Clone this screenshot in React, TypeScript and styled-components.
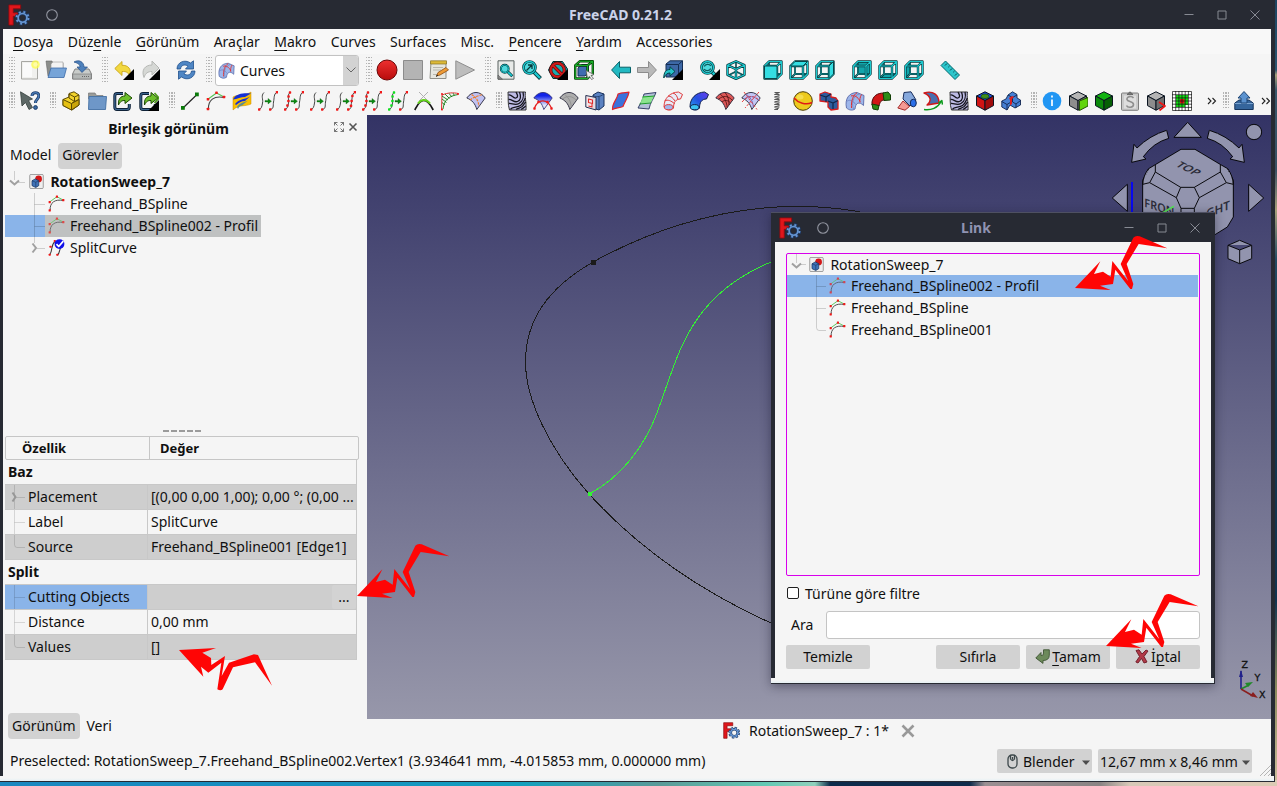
import React from "react";
import styled, { createGlobalStyle, css } from "styled-components";

const Global = createGlobalStyle`
  * { box-sizing: border-box; }
  html, body { margin: 0; padding: 0; overflow: hidden; }
  body { font-family: "Noto Sans", sans-serif; font-size: 14px; line-height: 19px; color: #101010; }
  svg { display: block; flex: none; }
`;

/* ---------- window chrome ---------- */

const Desktop = styled.div`
  position: relative;
  width: 1277px;
  height: 786px;
  overflow: hidden;
  background:
    linear-gradient(90deg, #1b87bf 0, #1690c0 330px, #12a0be 520px, #5a9a98 660px, #63c9b4 765px, #8fd0bc 815px, #0c2c4c 830px, #0f2c4c 970px, #9a8f92 985px, #8a8484 1100px, #d8c9b8 1130px, #dccab4 1277px) 0 780px / 1277px 6px no-repeat,
    linear-gradient(180deg, #1d4460 0, #2c5570 70px, #a8a07a 75px, #38566a 90px, #3a5064 170px, #a79f7a 210px, #224a62 260px, #14364e 420px, #123450 600px, #8c8a5c 690px, #d0c0a0 786px);
`;

const Frame = styled.div`
  width: 1275px;
  height: 782px;
  display: flex;
  flex-direction: column;
  background: #272a33;
  border-bottom: 1px solid #272a33;
`;

const TitleBar = styled.div<{ $h: number; $muted?: boolean }>`
  flex: none;
  height: ${(p) => p.$h}px;
  display: flex;
  align-items: center;
  padding-left: 8px;
  color: ${(p) => (p.$muted ? "#8f93b2" : "#cbd3ea")};
  font-weight: 700;
`;

const TitleLead = styled.div<{ $w: number }>`
  width: ${(p) => p.$w}px;
  display: flex;
  align-items: center;
  gap: 16px;
`;

const TitleText = styled.div`
  flex: 1;
  text-align: center;
`;

const TitleButtons = styled.div`
  width: 92px;
  display: flex;
  gap: 21px;
`;

const Body = styled.div`
  margin: 0 4px 0 3px;
  flex: 1;
  display: flex;
  flex-direction: column;
  background: #f5f5f5;
  min-height: 0;
`;

const BottomEdge = styled.div<{ $h: number }>`
  height: ${(p) => p.$h}px;
  flex: none;
  margin-right: 1px;
  background: linear-gradient(#f5f5f5 40%, #e6f1f5);
`;

const MenuBar = styled.div`
  height: 25px;
  flex: none;
  display: flex;
  align-items: center;
  gap: 14.4px;
  padding: 0 10px;
  background: #f8f8f8;
`;

const Key = styled.span`
  text-decoration: underline;
  text-decoration-thickness: 1px;
  text-underline-offset: 3px;
`;

const ToolRow = styled.div<{ $second?: boolean }>`
  height: ${(p) => (p.$second ? 30 : 31)}px;
  flex: none;
  display: flex;
  align-items: center;
  padding-left: 6px;
  padding-top: ${(p) => (p.$second ? 2 : 1)}px;
`;

const Tool = styled.div`
  width: 26px;
  height: 26px;
  flex: none;
  display: flex;
  align-items: center;
  justify-content: center;
`;

const Gap = styled.div<{ $w: number; $h?: number }>`
  flex: none;
  width: ${(p) => p.$w}px;
  height: ${(p) => p.$h ?? 0}px;
`;

const Grip = styled.div<{ $first?: boolean; $tall?: boolean; $after?: number }>`
  flex: none;
  width: 6px;
  height: ${(p) => (p.$tall ? 26 : 18)}px;
  margin-left: ${(p) => (p.$first ? 0 : 7)}px;
  margin-right: ${(p) => p.$after ?? 2}px;
  background:
    repeating-linear-gradient(180deg, transparent 0 1.5px, #f5f5f5 1.5px 3px),
    repeating-linear-gradient(90deg, #b4b4b4 0 1.3px, #f5f5f5 1.3px 2.4px);
`;

const Combo = styled.div`
  flex: none;
  width: 144px;
  height: 31px;
  margin-left: 1px;
  border: 1px solid #c2c2c2;
  border-radius: 3px;
  background: #fff;
  display: flex;
  align-items: center;
  overflow: hidden;
  padding-left: 2px;
`;

const ComboText = styled.div`
  flex: 1;
  padding-left: 5px;
`;

const ComboArrow = styled.div`
  width: 15px;
  height: 100%;
  background: #d3d3d3;
  display: flex;
  align-items: center;
  justify-content: center;
`;

const More = styled.div<{ $w: number }>`
  flex: none;
  width: ${(p) => p.$w}px;
  display: flex;
  justify-content: center;
`;

/* ---------- icons ---------- */

const INK = "#0b1521";
const TEAL = "#1cc9cf";
const TEALD = "#06363a";

const I = ({ children, s = 20 }: { children: React.ReactNode; s?: number }) => (
  <svg width={s} height={s} viewBox="0 0 20 20" fill="none" strokeLinejoin="round">
    {children}
  </svg>
);

const Corner = () => <path d="M20 9V20H9z" fill="#000" />;

const Logo = ({ s = 22 }: { s?: number }) => (
  <I s={s}>
    <path d="M.8.8H11.5V4.400H4.800V8H9V11.200H4.800V19.200H.8z" fill="#e0161b" stroke="#8a0d10" strokeWidth=".8" />
    <circle cx="13.200" cy="12.600" r="5.400" stroke="#1f3c68" strokeWidth="3" strokeDasharray="2.720 1.520" strokeDashoffset=".3" />
    <circle cx="13.200" cy="12.600" r="4" stroke="#1f3c68" strokeWidth="2.800" />
    <circle cx="13.200" cy="12.600" r="5.300" stroke="#6796d2" strokeWidth="1.900" strokeDasharray="1.700 2.460" strokeDashoffset="-.2" />
    <circle cx="13.200" cy="12.600" r="4" stroke="#6796d2" strokeWidth="1.500" />
  </I>
);

const Wire = ({ d, w = 1.2 }: { d: string; w?: number }) => (
  <>
    <path d={d} stroke={TEALD} strokeWidth={w + 1.2} />
    <path d={d} stroke={TEAL} strokeWidth={w} />
  </>
);

const ViewCube = ({ face, rear }: { face: string; rear?: boolean }) => (
  <I>
    {rear && <path d={face} fill="#12a5ab" stroke={TEALD} strokeWidth=".8" />}
    <Wire d="M6 2V14H19M6 14L1.5 18.5" w={0.6} />
    <Wire d="M1.5 6H14V18.5H1.5zM1.5 6L6 1.5H18.5L14 6M18.5 1.5V14L14 18.5" />
    {!rear && <path d={face} fill="#35dde2" stroke={TEALD} strokeWidth=".9" />}
  </I>
);

const Block = ({ top, left, right, children }: { top: string; left: string; right: string; children?: React.ReactNode }) => (
  <I>
    <g stroke={INK} strokeWidth="1">
      <path d="M10 .8L18.5 5 10 9.6 1.5 5z" fill={top} />
      <path d="M1.5 5L10 9.6V19.2L1.5 14.6z" fill={left} />
      <path d="M18.5 5L10 9.6V19.2L18.5 14.6z" fill={right} />
    </g>
    {children}
  </I>
);

const dotsL: [number, number][] = [[6, 1.5], [4.6, 5.5], [4.4, 10], [3.4, 14.5], [1.2, 18.5]];
const dotsR: [number, number][] = [[19, 1.2], [16.4, 5], [15.6, 10], [15, 14.8], [12.2, 18.5]];
const Dots = ({ at, c = "#f01818", r = 1.2 }: { at: [number, number][]; c?: string; r?: number }) => (
  <>
    {at.map(([x, y], i) => (
      <rect key={i} x={x - r} y={y - r} width={r * 2} height={r * 2} rx=".6" fill={c} />
    ))}
  </>
);

const Join = ({ l, r, lc, rc }: { l?: boolean; r?: boolean; lc?: string; rc?: string }) => (
  <I>
    <path d="M6 1.5C2.500 5 5.500 8 4.500 12C4 16 3 18 1 18.500" stroke="#333" strokeWidth=".9" />
    <path d="M19 1.200C15.500 3 16.500 7 15.500 11C15 15 16 18 12 18.500" stroke="#333" strokeWidth=".9" />
    <Dots at={l ? dotsL : [dotsL[4]]} c={lc} />
    <Dots at={r ? dotsR : [dotsR[0], dotsR[4]]} c={rc} />
    <path d="M7 9.400H10V7.400L13.500 10.200 10 13V11H7z" fill="#0c8a12" stroke="#064a08" strokeWidth=".3" />
  </I>
);

const SplineIcon = ({ s = 20, dim }: { s?: number; dim?: boolean }) => (
  <I s={s}>
    <g opacity={dim ? 0.7 : 1}>
      <path d="M2.200 8L10.500 2 18 6" stroke="#56c456" strokeWidth="1.100" />
      <path d="M2.500 18C2 9 8 4.500 18 6.500" stroke="#444" strokeWidth="1.100" />
      <Dots at={[[2, 18], [2, 8.300], [10.500, 1.800], [18, 6]]} r={1.300} />
    </g>
  </I>
);

const SplitIcon = ({ s = 17 }: { s?: number }) => (
  <I s={s}>
    <path d="M8 3C3 7 6 13 2 18.500M17 8C12 11 15 16 11 19" stroke="#333" strokeWidth="1.200" />
    <Dots at={[[8, 2.500], [2, 18.500], [11, 18.500], [3, 9]]} />
    <circle cx="13.500" cy="6" r="5.800" fill="#1010e8" />
    <path d="M10 6l2.600 2.800L18 2.500" stroke="#fff" strokeWidth="2" />
  </I>
);

const DocIcon = () => (
  <I s={15}>
    <rect x="1" y=".6" width="18" height="18.800" rx="1.500" fill="#efefef" stroke="#8b8b8b" strokeWidth="1.100" />
    <circle cx="12.800" cy="6.500" r="4.500" fill="#d21818" />
    <path d="M4 9L8.500 6.500 13 9V15.500L9 18 4 15.500z" fill="#3f73b8" stroke="#1a3763" />
    <path d="M4 9l5 2 4-2M9 11v6.500" stroke="#1a3763" strokeWidth=".8" />
  </I>
);

const FAN = "M.8 7C6-.4 14-.4 19.2 7L10.8 18.5C9.2 12.5 6 9 .8 7z";
const fanLines = "M5.2 3.2C9 6 11.5 10 12.3 16.500M10 1.5C13 5 14 9 14 14M3.5 8.2C8 4.500 13 4.300 17.5 9.500M7 11C10 8.500 12.5 9 15.5 12";
const Fan = ({ fill, line, children }: { fill: string; line?: string; children?: React.ReactNode }) => (
  <I>
    <path d={FAN} fill={fill} stroke="#28283c" strokeWidth=".9" />
    {line && <path d={fanLines} stroke={line} strokeWidth=".8" />}
    {children}
  </I>
);

const Zebra = () => (
  <I>
    <path d="M1 1H18.500C17.500 6 19.500 10 19 19H2.500C.5 13 1.500 7 1 1z" fill="#bdbbe4" />
    <g stroke="#14141c" strokeWidth="1.300">
      <path d="M1.500 4C5 3 6 8 9 7S10 3 9 1M1.500 8.500C5 8 7 12 10.500 10.500S14 5 12.500 1M2 12.500C5 12 8 15 12 12.500S17 5 16 1M3.500 18.500C5 15 10 17 13.500 14.500S17 9 18.500 7M9 18.500C12 17 15 17 16.500 14S18 12 18.800 11M14 18.500C16 17.500 17 16.500 18.800 15" />
    </g>
    <path d="M1 1H18.500C17.500 6 19.500 10 19 19H2.500C.5 13 1.500 7 1 1z" stroke="#222" strokeWidth=".9" />
  </I>
);

const PipeShape = "M1 16C1 7 7 1.500 15.500 1L19.500 3.500 17.500 8C13 8 10.500 11 10.500 17C8.500 20 3 19.500 1 16z";

const NewDoc = () => (
  <I>
    <path d="M1.500 1.500H17.500V19H1.500z" fill="#f0f0ee" stroke="#a7a7a3" />
    <path d="M3 3H12V17H3z" fill="#fafafa" />
    <circle cx="15.500" cy="4.500" r="4.300" fill="#ffff45" opacity=".75" />
    <circle cx="15.500" cy="4.500" r="2.200" fill="#fffca8" />
  </I>
);

const OpenDoc = () => (
  <svg width="22" height="20" viewBox="0 0 22 20">
    <path d="M1 1H7L8 3H18V16H3z" fill="#8b8d8a" stroke="#666" strokeWidth=".6" />
    <path d="M6 4L8 2H18V11H6z" fill="#f3f3f3" stroke="#999" strokeWidth=".6" />
    <path d="M6 8H21.500L19 17.500H3z" fill="#76a4d8" stroke="#3c6ba8" strokeWidth=".8" />
  </svg>
);

const SaveDoc = () => (
  <I>
    <path d="M3 9H17L19.500 14V19H.5V14z" fill="#c9ccca" stroke="#777" strokeWidth=".9" />
    <path d="M.8 14H19.200V19H.8z" fill="#b4b7b6" stroke="#777" strokeWidth=".6" />
    <path d="M10 16.500h7" stroke="#666" strokeDasharray="1 1" />
    <path d="M2 2C7-1 12 2 12 7H15.500L10 12.500 5 7H8C8 4 5 3 2 2z" fill="#4d80bb" stroke="#244e85" strokeWidth=".7" />
  </I>
);

const Undo = () => (
  <I>
    <path d="M.8 8.500L8 1.500V5.300C14 5 18 9 15.500 16C14.500 12.500 12.500 11.300 8 11.500V15.500z" fill="#f2d840" stroke="#c9a61a" strokeWidth=".9" />
    <Corner />
  </I>
);
const Redo = () => (
  <I>
    <path d="M19 8L12 1V5C5 5 1 10 4 17.500C5.500 13 8 11.500 12 11.500V15z" fill="#d6d8d5" stroke="#b6b8b5" />
    <Corner />
  </I>
);
const Refresh = () => (
  <I>
    <path d="M1 9C1 2 9-1 14.500 3L17.500.8V9H9.500L12 6.200C9 4 5 5 4.500 9z" fill="#4f86c4" stroke="#1f4f8c" strokeWidth=".8" />
    <path d="M19 11C19 18 11 21 5.500 17L2.500 19.200V11H10.500L8 13.800C11 16 15 15 15.500 11z" fill="#4f86c4" stroke="#1f4f8c" strokeWidth=".8" />
  </I>
);

const CurvesWb = ({ s = 17 }: { s?: number }) => (
  <I s={s}>
    <path d="M1.500 17C-.5 8 4 1.500 12 1.500L19 4.500 18.500 14.500C14 10 10.500 12 10 18C7 20 4 19 1.500 17z" fill="#9db6ea" stroke="#5a6aa8" strokeWidth=".9" />
    <path d="M8.500 18.500C6 10 9 4 15 2.800M1.200 11C4 8 8 9 10.500 13.500" stroke="#7080c0" strokeWidth=".8" />
    <path d="M6 5C9 4 13 5.500 15 10.500M12 1.800C8 4 6 10 6.500 17M16.500 3.500C15 6 14.500 9 15 11.500" stroke="#e03030" strokeWidth="1" />
  </I>
);

const Rec = () => (
  <svg width="22" height="22" viewBox="0 0 22 22">
    <defs><linearGradient id="rec" x1="0" y1="0" x2="0" y2="1"><stop offset="0" stopColor="#ee3030" /><stop offset="1" stopColor="#b80c0c" /></linearGradient></defs>
    <circle cx="11" cy="11" r="10" fill="url(#rec)" stroke="#6b0606" />
  </svg>
);
const Stop = () => <I><rect x=".5" y=".5" width="19" height="19" fill="#b4b4b4" stroke="#8c8c8c" /></I>;
const EditMacro = () => (
  <I>
    <path d="M2 2H17V18.500H1z" fill="#e6e6df" stroke="#8f8f88" />
    <path d="M1.500.8H17.500V4H1.500z" fill="#dcb938" stroke="#857021" strokeWidth=".7" />
    <path d="M4 7.500H14M4 10H12M4 14.500H9" stroke="#b0b0a8" strokeWidth=".9" />
    <path d="M7.500 16L9 12.500 17 7.500 19.500 10 11 15z" fill="#ee9b35" stroke="#8a4b12" strokeWidth=".8" />
    <path d="M7 16.500l2-1.500" stroke="#222" />
  </I>
);
const Play = () => <I><path d="M.8.8L19.500 10 .8 19.200z" fill="#bdbdbd" stroke="#8f8f8f" /></I>;

const Lens = ({ x = 8, y = 8, r = 5, inner }: { x?: number; y?: number; r?: number; inner?: React.ReactNode }) => (
  <>
    <path d={`M${x + r * 0.6} ${y + r * 0.6}L18.500 18.500`} stroke={TEALD} strokeWidth="4" />
    <path d={`M${x + r * 0.7} ${y + r * 0.7}L18 18`} stroke={TEAL} strokeWidth="2.400" />
    <circle cx={x} cy={y} r={r} fill="#4fd9dd" stroke={TEALD} strokeWidth="2.600" />
    <circle cx={x} cy={y} r={r} stroke={TEAL} strokeWidth="1.300" />
    {inner}
  </>
);
const FitAll = () => (
  <I>
    <path d="M2 .8H18V19.200H2z" fill="#e8eae8" stroke="#59615e" />
    <path d="M2 15V19.200H6.500z" fill="#888" stroke="#555" strokeWidth=".6" />
    <g transform="translate(3 3) scale(.72)"><Lens r={5.5} /></g>
  </I>
);
const FitSel = () => (
  <I><Lens r={6} x={7.5} y={7.5} inner={<path d="M4.500 10.500L9.500 5.500M6 5h4v4" stroke="#08383a" strokeWidth="1.300" />} /></I>
);
const NoDraw = () => (
  <I>
    <path d="M5 1.500H14.500L19.500 9 15 18.500H5L.5 10z" fill="#1aaab0" stroke="#042e32" />
    <circle cx="9.500" cy="10" r="6.800" stroke="#5c0404" strokeWidth="3.200" />
    <path d="M5 5.500L14 14.500" stroke="#5c0404" strokeWidth="3.200" />
    <circle cx="9.500" cy="10" r="6.800" stroke="#d01b1b" strokeWidth="2" />
    <path d="M5 5.500L14 14.500" stroke="#d01b1b" strokeWidth="2" />
    <Corner />
  </I>
);
const BoxSel = () => (
  <I>
    <path d="M4 8L8 4.500H14.500V12L11 16H4z" fill="#3f6cb0" stroke="#14305c" />
    <path d="M1.200 5.500H13.500V18.500H1.200zM1.200 5.500L6 1.200H18.800L13.500 5.500M18.800 1.200V13.500L13.500 18.500" stroke="#063a06" strokeWidth="2.400" />
    <path d="M1.200 5.500H13.500V18.500H1.200zM1.200 5.500L6 1.200H18.800L13.500 5.500M18.800 1.200V13.500L13.500 18.500" stroke="#18b028" strokeWidth="1.100" />
    <path d="M12 10.500L20 14.500 17 15.500 19.500 18.500 17.500 19.500 15.500 16.500 13.500 18z" fill="#eee" stroke="#555" strokeWidth=".7" />
  </I>
);
const ArrowL = () => <I><path d="M.6 10L8.500 1.500V7.200H19.500V12.800H8.500V18.500z" fill="#22b9c2" stroke="#076168" /></I>;
const ArrowR = () => <I><path d="M19.400 10L11.500 1.500V7.500H.5V12.500H11.500V18.500z" fill="#b9b9b9" stroke="#8d8d8d" /></I>;
const LinkGo = () => (
  <I>
    <path d="M3 4L7 .8H19.500V13L16 17H3z" fill="#3d68a6" stroke="#152e55" />
    <path d="M3 4.500H15.500V17M15.500 4.500L19.500 .8" stroke="#152e55" />
    <path d="M.8 18C.8 12 3 9.500 7 9.500V6.800L12 11.500 7 16V13C4 13 2.500 14.500.8 18z" fill="#25c2c9" stroke="#04454a" />
    <Corner />
  </I>
);
const SyncView = () => (
  <I>
    <Lens r={6} x={7.5} y={7.5} inner={<path d="M4.300 6.500c1-2.500 5-3 6.500-.5M10.700 8.500c-1 2.500-5 3-6.500.5" stroke="#0a5a5e" strokeWidth="1.300" />} />
    <Corner />
  </I>
);
const Iso = () => (
  <I>
    <Wire d="M10 2V8M2 15.500L10 11.500 18 15.500" w={0.4} />
    <Wire d="M10 1.300L18.500 5.200V14.800L10 18.800 1.500 14.800V5.200zM1.500 5.200L10 9.200 18.500 5.200M10 9.200V18.800" />
  </I>
);
const Ruler = () => (
  <I>
    <path d="M5.500 1L19.500 15 15 19.500 1 5.500z" fill="#2bc5cb" stroke="#056a70" />
    <path d="M7 3.500L5 5.500M9.500 6L8.300 7.200M12 8.500L10 10.500M14.500 11L13.300 12.200M17 13.500L15 15.500" stroke="#05474b" />
  </I>
);

const WhatsThis = () => (
  <I>
    <path d="M.5 .8L12.500 8 8.500 9.500 12.500 16.500 9 18.500 5.500 11.500 2 15z" fill="#5d6866" stroke="#36403e" strokeWidth=".8" />
    <path d="M12 5C12 .5 19 .5 18.800 5C18.600 8.500 15.500 8 15.500 12" stroke="#1e3f6b" strokeWidth="3" />
    <path d="M12 5C12 .5 19 .5 18.800 5C18.600 8.500 15.500 8 15.500 12" stroke="#4a7ab5" strokeWidth="1.400" />
    <circle cx="15.500" cy="16.500" r="1.900" fill="#3a6aa4" stroke="#1e3f6b" />
  </I>
);
const Part = () => (
  <I>
    <g fill="#f2d32b" stroke="#5c4a03" strokeWidth="1">
      <path d="M8 2.500L13 .8 18 4V14L11 19 2 14.500V8.500L8 6z" />
      <path d="M2 8.500L10.500 12.500V19L2 14.500z" fill="#e5c012" />
      <path d="M8 3L13.500 6V10.500L18 8.500M13.500 6L18 4M8 3V7L13.500 10.500L10.500 12.500" />
      <path d="M10.500 12.500L18 8.500V14L10.500 19z" fill="#c9a50a" />
    </g>
  </I>
);
const Folder = () => (
  <I>
    <path d="M1.500 2H8L9.500 4.500H16V8H1.500z" fill="#9a9c99" stroke="#777" strokeWidth=".7" />
    <path d="M2 5.500H19.500L18.500 18.500H1.500z" fill="#6e97c8" stroke="#4470a4" strokeWidth=".9" />
  </I>
);
const LinkIcon = ({ more }: { more?: boolean }) => (
  <I>
    <path d="M10 2.500H4Q1.800 2.500 1.800 5V16Q1.800 18.500 4 18.500H14Q16.300 18.500 16.300 16V13" stroke="#0e2137" strokeWidth="3" />
    <path d="M10 2.500H4Q1.800 2.500 1.800 5V16Q1.800 18.500 4 18.500H14Q16.300 18.500 16.300 16V13" stroke="#3b648f" strokeWidth="1.200" />
    <path d="M5.500 14C5 8 7.500 5 12 5V1.500L19 7 12 12.500V9.500C9 9.300 7 10.500 5.500 14z" fill="#6cbf2a" stroke="#1d4a05" />
    {more && <path d="M15.500 2L20 7 15.500 12" stroke="#4f9d1b" strokeWidth="1.600" />}
    {more && <Corner />}
  </I>
);

const LineIcon = () => (
  <I>
    <path d="M3 17L17 3.500" stroke="#222" strokeWidth="1.200" />
    <rect x="1" y="15" width="3.800" height="3.800" fill="#0a7a0a" /><rect x="15" y="1.500" width="3.800" height="3.800" fill="#0a7a0a" />
  </I>
);
const Ribbon = () => (
  <I>
    <path d="M1 6C6 3 13 5 19 1V13C13 16 7 13 1 19z" fill="#f9be00" stroke="#c98b00" strokeWidth=".5" />
    <path d="M1 8.500C4 2 13 2 19 2.500L13 6C9 6 5 8 1 8.500z" fill="#1430d4" />
    <path d="M3 13C8 7 13 9 18 5.500L13 10C9 10 7 12 4 14z" fill="#1430d4" />
    <path d="M5 16C8 11 12 12 16 9.500L10 14.500C8 14.500 7 16 6 18z" fill="#5c8c8f" />
  </I>
);
const Cross = () => (
  <I>
    <path d="M5 1L14 10M14 1L5 10" stroke="#b0b0b0" />
    <path d="M.8 19C3 15 5 9.500 9.800 9.500S17 15 19.200 19" stroke="#151515" strokeWidth="1.700" />
    <path d="M4 12.500C5.500 10.500 7 9 9.800 9S14.500 10.500 16 12.500" stroke="#62d11a" strokeWidth="2" />
  </I>
);
const Comb = () => (
  <I>
    <path d="M1.500 19L2 4C8 1.500 13 1.500 18.500 2.500" stroke="#e03030" strokeWidth="1" />
    <path d="M3 18C4 9 9 5 18 3.500M2 5l6 4M2 8l4.500 3.500M2 11.500l3 2.500M5 3l4.500 4.500M9 2.500l3 3.500M13 2.200l1.500 2.300" stroke="#127a12" strokeWidth=".9" />
    <Dots at={[[2, 3], [18, 3], [2, 18.500]]} r={.9} />
  </I>
);

const Sketch = () => (
  <I>
    <path d="M8 4L13 1 19 3V15L14 19 8 17z" fill="#5b82c2" stroke="#1b335e" />
    <path d="M14 6V18.500M8 4.500C11 6 14 6.500 19 3" stroke="#1b335e" strokeWidth=".8" />
    <path d="M.8 4.500L11 6.500V19L.8 16z" fill="#f2e4e6" fillOpacity=".92" stroke="#222e50" />
    <path d="M3.500 8L7.500 9V12.500L3.500 11.500zM7 12.500V16L3.500 15" stroke="#e02a2a" strokeWidth="1.100" />
  </I>
);
const Patch = ({ fill, stroke }: { fill: string; stroke: string }) => (
  <I><path d="M1.500 18.500C1 12 6 9 7 3C11 1 15 2 18 1.200C17 7 14 10 12 15.500C8 17 4 17 1.500 18.500z" fill={fill} stroke={stroke} strokeWidth="1.200" /></I>
);
const Loft = () => (
  <I>
    <path d="M1 17C3 13 6 9 7 3L19 1.500C17 7 13 12 12 18z" fill="#b3c0d8" stroke="#26305c" strokeWidth=".9" />
    <path d="M3 12.500L6 5.500L17 5 14 11.500z" fill="#86e886" opacity=".9" />
    <path d="M2.500 13L14 12M5.500 6L17.500 5" stroke="#0f9a18" strokeWidth=".9" />
  </I>
);
const Pipe = ({ rings }: { rings?: boolean }) => (
  <I>
    <defs><linearGradient id="pipe" x1="0" y1="1" x2="1" y2="0"><stop offset="0" stopColor="#2aa8f0" /><stop offset=".5" stopColor="#2450e0" /><stop offset="1" stopColor="#6a3cf0" /></linearGradient></defs>
    <path d={PipeShape} fill={rings ? "#e8ecf8" : "url(#pipe)"} stroke={rings ? "#e03a3a" : "#10204e"} strokeWidth="1" />
    {rings && <path d="M1.500 10C5 8 8 10 11.500 12.500M5 5C8 5 10 7 12 10M10 2C13 3 14 5 15 8.500" stroke="#e03a3a" strokeWidth="1" />}
    <ellipse cx="5.700" cy="16.200" rx="4.300" ry="2.600" fill={rings ? "#a3b6ea" : "#3cc3f2"} stroke={rings ? "#e03a3a" : "#10204e"} />
  </I>
);
const Spring = () => (
  <I>
    <path d="M7.500 1.500H12.500L7.500 3.500H12.500M12.500 4.500L7.500 6H12.500M12.500 7L7.500 8.500H12.500M12.500 9.500L7.500 11H12.500M12.500 12L7.500 13.500H12.500M12.500 14.500L7.500 16H12.500M12 17L7.500 18.500H11" stroke="#555" strokeWidth="1" />
  </I>
);
const Ball = () => (
  <I>
    <circle cx="10" cy="10" r="9.300" fill="#edca1e" stroke="#4d3d02" />
    <ellipse cx="7" cy="6" rx="3.500" ry="2.500" fill="#f5dc50" />
    <path d="M1 7C5 12 13 14.500 19 11.500" stroke="#e01818" strokeWidth="1.400" />
  </I>
);
const Blocks = () => (
  <I>
    <path d="M1 3L6 1 12 3V6L17 7 19 10V18L12 19 9 16V11L1 10z" fill="#2f5c9e" stroke="#d81c1c" strokeWidth="1.300" />
    <path d="M1 4L7 6 12 3M7 6V11M9 10L14 12 19 9.500M14 12V18" stroke="#10264b" strokeWidth="1.200" />
  </I>
);
const RedPipe = () => (
  <I>
    <path d="M1 11C2 5 6 2 13 2L14 9C10 9 9 11 8 15L1 14z" fill="#d21717" stroke="#4c0505" />
    <path d="M12 2L17 1 19.500 4V9L13 9.500zM1 13L8 14.500 7 19 2 18z" fill="#2d8c16" stroke="#123f06" />
  </I>
);
const Blend = () => (
  <I>
    <path d="M7 1.500L14 .8 19 9 13 15 6 8z" fill="#86a8dc" stroke="#1a2e5c" />
    <ellipse cx="16.300" cy="12" rx="3" ry="3.800" fill="#2b6fe8" stroke="#142a58" />
    <path d="M.8 17L6 10 12.500 15.500 8 19.200z" fill="#f49a94" stroke="#a42a2a" />
  </I>
);
const Revolve = () => (
  <I>
    <path d="M1 2C10-1 16 4 16 12L4 14C9 10 8 5 1 2z" fill="#4a6eae" stroke="#d01818" strokeWidth="1.400" />
    <path d="M1 18.500C8 19.500 15 17 18 10.500M15.500 12L18.800 9.500 19.500 13.500" stroke="#0c9a1c" strokeWidth="1.500" />
  </I>
);
const Assembly = () => (
  <I>
    <g stroke="#122650" strokeWidth=".9">
      <path d="M7 4L11.500 .8 16 3.500V7L19.500 9V14L14 17 9 14 6 19 .8 16V10L5 8z" fill="#4680d4" />
      <path d="M7 4L11.500 6.500V11L15 13L19.500 9.500M11.500 6.500L16 4M.8 10.500L6 13.500V19M6 13.500L10 11M15 13V17" />
    </g>
    <path d="M8 7L11 5 13 6 11 8V13L9 14.500V9z" fill="#dc2020" />
  </I>
);
const Info = () => (
  <I>
    <circle cx="10" cy="10" r="9.300" fill="#2196f3" />
    <path d="M10 8.500V15M10 4.500V6.500" stroke="#fff" strokeWidth="1.700" />
  </I>
);
const Clip = () => (
  <I>
    <rect x="1.500" y="2" width="17" height="17.300" rx="1" fill="#c9c9c9" stroke="#7e7e7e" />
    <rect x="4" y="4.500" width="12" height="13" fill="#dedede" />
    <path d="M7 3.500L10 .8 13 3.500z" fill="#777" stroke="#555" strokeWidth=".7" />
    <path d="M13.500 7C12 4.800 6.500 5 7 8.500C7.500 11 13.500 10 13.500 13.500C13.500 17 7.500 17 6.500 14.500" stroke="#8e8e8e" strokeWidth="1.600" />
  </I>
);
const GridIcon = () => (
  <I>
    <rect x=".5" y=".5" width="19" height="19" fill="#fff" />
    <path d="M4 4H16V14H13V16H4z" fill="#12e012" />
    <rect x="8" y="8" width="4.500" height="4.500" fill="#e81010" />
    <path d="M.5.500H19.500V19.500H.5zM3.700 0V20M6.900 0V20M10 0V20M13.200 0V20M16.400 0V20M0 3.700H20M0 6.900H20M0 10H20M0 13.200H20M0 16.400H20" stroke="#111" strokeWidth=".7" />
  </I>
);
const Upload = () => (
  <I>
    <path d="M.8 12L5 9H15L19.200 12V18.500H.8z" fill="#35659c" stroke="#17365e" />
    <path d="M.8 12.500H19.200" stroke="#7ba3d0" />
    <path d="M10 .5L16 7H13V12H7V7H4z" fill="#5b92cf" stroke="#1d4475" />
  </I>
);

const Chev = () => (
  <svg width="10" height="8" viewBox="0 0 10 8" fill="none" stroke="#222" strokeWidth="1.100">
    <path d="M1 1L4 4 1 7M5.500 1L8.500 4 5.500 7" />
  </svg>
);

const tools = (list: React.ComponentType[]) => list.map((C, i) => <Tool key={i}><C /></Tool>);

const curveTools: React.ComponentType[] = [
  LineIcon,
  () => <SplineIcon />,
  Ribbon,
  () => <Join />,
  () => <Join l />,
  () => <Join />,
  () => <Join r />,
  () => <Join l />,
  () => <Join l lc="#10e020" />,
  Cross,
  Comb,
  () => <Fan fill="#c0c2f2"><path d="M5.500 3.500C10 6 12 9 13 15M4 9C9 5 13 5 16.500 3.500" stroke="#ef7d28" strokeWidth="1.200" strokeDasharray="2.500 1" /></Fan>,
];

const surfaceTools: React.ComponentType[] = [
  Zebra,
  () => (
    <I>
      <defs><linearGradient id="fanBlue" x1="0" y1="0" x2="0" y2="1"><stop offset=".2" stopColor="#1224e8" /><stop offset=".75" stopColor="#e4e6fb" /></linearGradient></defs>
      <path d={FAN} fill="url(#fanBlue)" stroke="#28286c" strokeWidth=".8" />
      <path d="M1.500 17C5 8 14 7 18.500 17" stroke="#e02020" strokeWidth="1.200" />
      <Dots at={[[1.5, 17.500], [5.500, 11], [14.500, 11], [18.500, 17.500]]} />
    </I>
  ),
  () => <Fan fill="#adadad"><path d="M5.200 3.200C9 6 12 10 12.300 16M3.500 8C8 4.500 13 4.500 17.500 9.500" stroke="#8a8a8a" strokeWidth=".7" /></Fan>,
  Sketch,
  () => <Patch fill="#3a72dc" stroke="#e0242c" />,
  Loft,
  () => <Pipe rings />,
  () => <Pipe />,
  () => <Fan fill="#de5858" line="#4a1010" />,
  () => <Fan fill="#c4c6f4"><path d="M5.200 3.200C9 6 12 10 12.300 16M3.500 8C8 4.500 13 4.500 17.500 9.500" stroke="#5b5bb0" strokeWidth=".8" /><path d="M3 1L16 18.500M18 1L4 17M1 11C7 4 13 4 19 10" stroke="#e83030" strokeWidth=".9" strokeDasharray="2.500 1.500" /></Fan>,
  Spring,
  Ball,
  Blocks,
  () => <CurvesWb s={20} />,
  RedPipe,
  Blend,
  Revolve,
  Zebra,
  () => <Block top="#1a48e0" left="#d01414" right="#a00c0c"><ellipse cx="10" cy="5.300" rx="4" ry="2.300" fill="#3f8f1c" stroke="#153c06" strokeWidth=".6" /></Block>,
  Assembly,
];

const inspectTools: React.ComponentType[] = [
  Info,
  () => <Block top="#b5b5b5" left="#8d8d8d" right="#6f6f6f"><path d="M11.500 10L20 6.500V15L11.500 19.500z" fill="#62d40c" stroke="#245604" /></Block>,
  () => <Block top="#12b312" left="#0b8a0b" right="#066006" />,
  Clip,
  () => <Block top="#b5b5b5" left="#8d8d8d" right="#6f6f6f"><path d="M13 11L19 15 13.500 19.500" stroke="#ee1515" strokeWidth="1.700" /></Block>,
  GridIcon,
];

/* ---------- combined view dock ---------- */

const Main = styled.div`
  height: 604px;
  flex: none;
  display: flex;
`;

const Dock = styled.div`
  width: 364px;
  height: 628px;
  flex: none;
  display: flex;
  flex-direction: column;
`;

const DockTitle = styled.div`
  height: 28px;
  flex: none;
  display: flex;
  align-items: center;
  padding: 0 9px 2px 0;
  font-weight: 700;
`;

const DockName = styled.div`
  flex: 1;
  text-align: center;
`;

const DockButtons = styled.div`
  display: flex;
  gap: 4px;
  padding-bottom: 2px;
`;

const Tabs = styled.div<{ $indent?: number }>`
  display: flex;
  height: 26px;
  flex: none;
  padding-left: ${(p) => p.$indent ?? 0}px;
`;

const Tab = styled.div<{ $on?: boolean; $pad?: number; $line?: number }>`
  padding: 0 ${(p) => p.$pad ?? 4}px;
  line-height: ${(p) => p.$line ?? 24}px;
  border-radius: 4px;
  background: ${(p) => (p.$on ? "#d2d2d2" : "transparent")};
`;

const Tree = styled.div`
  margin-top: 2px;
  padding-left: 2px;
  height: 257px;
`;

const TreeRow = styled.div<{ $hot?: boolean; $bold?: boolean }>`
  height: 22px;
  display: flex;
  background: ${(p) => (p.$hot ? "#8ab4e9" : "transparent")};
  font-weight: ${(p) => (p.$bold ? 700 : 400)};
`;

const TreeItem = styled.div<{ $sel?: boolean }>`
  display: flex;
  align-items: center;
  padding: 0 3px 1px;
  background: ${(p) => (p.$sel ? "#bfc1c1" : "transparent")};
  svg { margin-right: 5px; }
`;

const SelBlock = styled.div`
  background: #8ab4e9;
`;

const BranchSvg = ({ w, d, arrow }: { w: number; d: string; arrow?: "down" | "right" }) => (
  <svg width={w} height="22" viewBox={`0 0 ${w} 22`} fill="none">
    <path d={d} stroke="#000" strokeOpacity=".16" />
    {arrow === "down" && <path d="M5 9.500L9.500 13.500 14 9.500" stroke="#a0a0a0" strokeWidth="2" />}
    {arrow === "right" && <path d="M27.500 6.500L31 11 27.500 15.500" stroke="#a0a0a0" strokeWidth="2" />}
  </svg>
);

const Splitter = styled.div`
  height: 8px;
  flex: none;
  display: flex;
  justify-content: center;
  align-items: center;
  gap: 2px;
  padding: 0 6px 2px 0;
`;
const Dash = styled.i`
  width: 6px;
  height: 2px;
  background: #9b9b9b;
`;

const Props = styled.div`
  margin: 0 7px 0 2px;
  height: 277px;
  flex: none;
`;

const PropHead = styled.div`
  height: 24px;
  width: 354px;
  display: flex;
  border: 1px solid #c6c6c6;
  border-radius: 2px;
  font-weight: 700;
  font-size: 13px;
  line-height: 23px;
`;
const HeadCell = styled.div<{ $w?: number; $pad: number }>`
  ${(p) => (p.$w ? css`width: ${p.$w}px; border-right: 1px solid #c6c6c6;` : css`flex: 1;`)}
  padding-left: ${(p) => p.$pad}px;
`;

const PropRow = styled.div<{ $dark?: boolean }>`
  height: 25px;
  width: 352px;
  display: flex;
  border-bottom: 1px solid #c8c8c8;
  border-right: 1px solid #c8c8c8;
  background: ${(p) => (p.$dark ? "#cecece" : "transparent")};
  line-height: 24px;
`;
const Group = styled(PropRow)`
  font-weight: 700;
  padding-left: 3px;
`;
const PropName = styled.div<{ $hot?: boolean }>`
  width: 143px;
  flex: none;
  display: flex;
  border-right: 1px solid #c8c8c8;
  background: ${(p) => (p.$hot ? "#8ab4e9" : "transparent")};
`;
const PropValue = styled.div`
  flex: 1;
  padding-left: 3px;
  display: flex;
  white-space: nowrap;
`;
const Dots3 = styled.span`
  width: 24px;
  margin-left: auto;
  text-align: center;
  background: #d3d3d3;
  border-radius: 2px;
`;

const PropLine = ({ name, value, dark, hot, last, arrow, button }: { name: string; value: string; dark?: boolean; hot?: boolean; last?: boolean; arrow?: boolean; button?: boolean }) => (
  <PropRow $dark={dark}>
    <PropName $hot={hot}>
      <svg width="23" height="24" viewBox="0 0 23 24" fill="none">
        <path d={last ? "M9.500 0V9.500Q9.500 12.500 12 12.500H20" : "M9.500 0V25M9.500 12.500H20"} stroke="#000" strokeOpacity=".13" />
        {arrow && <path d="M7.500 7.500L10.500 12 7.500 16.500" stroke="#979797" strokeWidth="2" />}
      </svg>
      {name}
    </PropName>
    <PropValue>{value}{button && <Dots3>...</Dots3>}</PropValue>
  </PropRow>
);

/* ---------- 3D view ---------- */

const View = styled.div`
  flex: 1;
  background: linear-gradient(#333365, #9797aa);
`;

const Scene = () => (
  <svg width="904" height="604" viewBox="367 115 904 604" fill="none">
    <g shapeRendering="crispEdges">
      <path d="M870 214C840 207 810 206 786 206.500C725 209 660 225 593 262C548 288 525.500 320 525.500 362C525.500 400 550 450 589 494C640 550 700 591 771 623L800 635" stroke="#1b1b1b" />
      <path d="M589 494C622 477 645 445 657 413C664 393 668 382 673 368C690 320 716 285 771 262" stroke="#33f533" />
      <rect x="591" y="260" width="5" height="5" fill="#1b1b1b" />
      <rect x="588" y="492" width="4" height="4" fill="#33f533" />
    </g>
    <g transform="translate(1090 112) scale(.33333)" fill="#9294ae" stroke="#08080c" strokeWidth="3" strokeLinejoin="round">
      <g shapeRendering="crispEdges">
        <path d="M252 76L293 31 334 76z" />
        <path d="M67 258L112 217V298z" />
        <path d="M521 258L476 217V298z" />
        <circle cx="492" cy="60" r="23" />
        <path d="M230 55L236 79Q190 92 160 134L168 141 125 151 132 97 141 108Q180 70 230 55z" />
        <path d="M358 55L352 79Q398 92 428 134L420 141 463 151 456 97 447 108Q408 70 358 55z" />
        <path d="M273 112H315L392 158 413 170 430 205V315L412 345 375 368 290 400 180 350 158 310V205L176 170 196 158z" />
        <path d="M196 158V180L272 226H313L391 180V158M196 180L179 212 158 217M272 226L259 257 179 212M313 226L328 257 409 212M391 180L409 212 430 217M259 257L273 289H313L328 257M273 289V320M313 289V320M176 170Q160 190 158 217M413 170Q428 190 430 217" />
        <path d="M414 400L449 385 485 400V440L449 455 414 440zM414 400L449 414 485 400M449 414V455" />
      </g>
      <path d="M126 210V310" stroke="#0808f0" strokeWidth="6" />
      <g fill="#2c2d3a" stroke="none" fontFamily="Noto Sans, sans-serif" fontWeight="600" fontSize="38">
        <text transform="matrix(.86 .42 -.72 .5 254 161)">TOP</text>
        <text transform="matrix(.86 .28 0 .95 163 284)">FRON</text>
        <text transform="matrix(.92 -.36 0 .95 348 319)">GHT</text>
      </g>
      <path d="M205 310L252 283" stroke="#58e458" strokeWidth="5" />
    </g>
    <g strokeWidth="1.600">
      <path d="M1241 689V671" stroke="#20208a" />
      <path d="M1241 670l-2 7h4z" fill="#20208a" />
      <path d="M1241 689l8-4" stroke="#208a28" /><path d="M1253 682l-8 1 3 4z" fill="#208a28" />
      <path d="M1241 689l12 7" stroke="#8a2020" /><path d="M1258 698l-5-6-3 4z" fill="#8a2020" />
    </g>
    <g fill="#111" stroke="#111" strokeWidth=".3" fontFamily="DejaVu Sans, sans-serif" fontSize="9.500">
      <text x="1241.500" y="668">Z</text><text x="1254.500" y="681">Y</text><text x="1259" y="698">X</text>
    </g>
  </svg>
);

/* ---------- bottom area ---------- */

const BottomRow = styled.div`
  height: 26px;
  flex: none;
  display: flex;
  align-items: center;
  padding: 0 0 3px 720px;
`;
const MdiTab = styled.div`
  display: flex;
  align-items: center;
  width: 192px;
  svg:first-child { margin-right: 9px; }
  svg:last-child { margin-left: auto; }
`;
const StatusBar = styled.div`
  flex: 1;
  display: flex;
  align-items: flex-start;
  padding: 4px 0 0 7px;
`;
const StatusText = styled.div`
  flex: 1;
  line-height: 24px;
`;
const StatusButton = styled.div<{ $w: number; $gap: number }>`
  width: ${(p) => p.$w}px;
  margin-right: ${(p) => p.$gap}px;
  height: 24px;
  display: flex;
  align-items: center;
  justify-content: space-between;
  padding: 0 2px;
  border-radius: 2px;
  background: #d2d2d2;
  white-space: nowrap;
`;
const Mouse = styled.div`
  display: flex;
  align-items: center;
  gap: 5px;
  padding-left: 8px;
`;
const Caret = () => <svg width="8" height="8" viewBox="0 0 8 8"><path d="M0 3.500H8L4 8z" fill="#4c4c4c" /></svg>;

/* ---------- link dialog ---------- */

const Dialog = styled.div`
  position: absolute;
  left: 771px;
  top: 212px;
  width: 444px;
  height: 472px;
  background: #272a33;
  border-top: 1px solid #4e5062;
  border-bottom: 1px solid #272a33;
  box-shadow: 0 2px 10px rgba(20, 20, 40, 0.45);
  display: flex;
  flex-direction: column;
`;
const DialogBody = styled.div`
  margin: 0 4px;
  flex: 1;
  background: #f5f5f5;
  padding: 11px 11px 0;
`;
const LinkList = styled.div`
  height: 323px;
  border: 1px solid #d800ec;
  border-radius: 2px;
  padding-right: 1px;
  > :first-child { height: 21px; }
`;
const CheckRow = styled.label`
  display: flex;
  align-items: center;
  gap: 6px;
  height: 22px;
  margin-top: 6px;
  padding-left: 1px;
`;
const Box = styled.span`
  width: 12px;
  height: 12px;
  border: 1px solid #202020;
  border-radius: 2px;
  background: #fff;
`;
const SearchRow = styled.div`
  display: flex;
  align-items: center;
  margin-top: 7px;
`;
const SearchLabel = styled.div`
  width: 40px;
  padding: 0 0 2px 5px;
`;
const SearchInput = styled.div`
  flex: 1;
  height: 28px;
  background: #fff;
  border: 1px solid #c4c4c4;
  border-radius: 3px;
`;
const Buttons = styled.div`
  display: flex;
  gap: 6px;
  margin-top: 6px;
`;
const Button = styled.div<{ $push?: boolean }>`
  width: 84px;
  height: 24px;
  margin-right: ${(p) => (p.$push ? "auto" : 0)};
  padding-bottom: 1px;
  display: flex;
  align-items: center;
  justify-content: center;
  gap: 2px;
  background: #d2d2d2;
  border-radius: 2px;
`;

const WinButtons = () => (
  <TitleButtons>
    {["M1.500 5.500H10.500", "M2 2H10V10H2z", "M1.500 1.500L10.500 10.500M10.500 1.500L1.500 10.500"].map((d) => (
      <svg key={d} width="12" height="12" viewBox="0 0 12 12" fill="none" stroke="#878a93"><path d={d} /></svg>
    ))}
  </TitleButtons>
);
const Ring = () => <svg width="12" height="12" viewBox="0 0 12 12" fill="none" stroke="#9295a0" strokeWidth="1.100"><circle cx="6" cy="6" r="5.300" /></svg>;

/* ---------- red annotation arrows ---------- */

const Mark = styled.svg<{ $x: number; $y: number }>`
  position: absolute;
  left: ${(p) => p.$x}px;
  top: ${(p) => p.$y}px;
`;
const Bolt = ({ x, y }: { x: number; y: number }) => (
  <Mark $x={x} $y={y - 53} width="94" height="56" viewBox="0 -159 282 168">
    <path d="M0 0L76-80 57-42 84-49 107-34 112-81 160-20 137-72 175-151Q182-159 194-155L277-119 191-132 155-72 175-12 171 3 166 3 121-55 114-12 75-7 107 6z" fill="#ff0505" />
  </Mark>
);
const BoltDown = ({ x, y }: { x: number; y: number }) => (
  <Mark $x={x} $y={y - 3} width="94" height="46" viewBox="0 -9 282 138">
    <path d="M0 0L111-6 70 8 96 24 97 45 138 18 128 78 150 38 225 13 237 15 279 107 228 37 162 52 131 118Q125 124 115 118L127 38 88 68 66 50 73 80z" fill="#ff0505" />
  </Mark>
);

export default function App() {
  return (
    <Desktop>
      <Global />
      <Frame>
        <TitleBar $h={29}>
          <TitleLead $w={50}><Logo /><Ring /></TitleLead>
          <TitleText>FreeCAD 0.21.2</TitleText>
          <WinButtons />
        </TitleBar>
        <Body>
          <MenuBar>
            <span><Key>D</Key>osya</span>
            <span>Düz<Key>e</Key>nle</span>
            <span><Key>G</Key>örünüm</span>
            <span>Araçlar</span>
            <span><Key>M</Key>akro</span>
            <span>Curves</span>
            <span>Surfaces</span>
            <span>Misc.</span>
            <span><Key>P</Key>encere</span>
            <span><Key>Y</Key>ardım</span>
            <span>Accessories</span>
          </MenuBar>
          <ToolRow>
            <Grip $first $tall />
            {tools([NewDoc, OpenDoc, SaveDoc])}
            <Grip $tall $after={3} />
            {tools([Undo, Redo])}
            <Gap $w={10} />
            {tools([Refresh])}
            <Grip $tall />
            <Combo>
              <CurvesWb />
              <ComboText>Curves</ComboText>
              <ComboArrow>
                <svg width="10" height="6" viewBox="0 0 10 6" fill="none" stroke="#666"><path d="M.5.500L5 5 9.500.500" /></svg>
              </ComboArrow>
            </Combo>
            <Grip $tall />
            {tools([Rec, Stop, EditMacro, Play])}
            <Grip $tall />
            {tools([FitAll, FitSel, NoDraw, BoxSel])}
            <Gap $w={11} />
            {tools([ArrowL, ArrowR, LinkGo])}
            <Gap $w={11} />
            {tools([SyncView, Iso])}
            <Gap $w={11} />
            <Tool><ViewCube face="M1.500 6H14V18.500H1.500z" /></Tool>
            <Tool><ViewCube face="M1.500 6L6 1.500H18.500L14 6z" /></Tool>
            <Tool><ViewCube face="M14 6L18.500 1.500V14L14 18.500z" /></Tool>
            <Gap $w={11} />
            <Tool><ViewCube rear face="M6 1.500H18.500V14H6z" /></Tool>
            <Tool><ViewCube rear face="M1.500 18.500L6 14H18.500L14 18.500z" /></Tool>
            <Tool><ViewCube rear face="M1.500 6L6 1.500V14L1.500 18.500z" /></Tool>
            <Gap $w={10} />
            {tools([Ruler])}
          </ToolRow>
          <ToolRow $second>
            <Grip $first />
            {tools([WhatsThis])}
            <Grip />
            {tools([Part, Folder, () => <LinkIcon />, () => <LinkIcon more />])}
            <Grip />
            {tools(curveTools)}
            <Grip />
            {tools(surfaceTools)}
            <Grip />
            {tools(inspectTools)}
            <More $w={28}><Gap $w={6} /><Chev /></More>
            <Grip $first />
            {tools([Upload])}
            <More $w={17}><Chev /></More>
          </ToolRow>
          <Main>
            <Dock>
              <DockTitle>
                <DockName>Birleşik görünüm</DockName>
                <DockButtons>
                  <svg width="10" height="10" viewBox="0 0 10 10" fill="none" stroke="#555">
                    <path d="M.5 3.500V.500H3.500M.5.500L3.500 3.500M6.500.500H9.500V3.500M9.500.500L6.500 3.500M.5 6.500V9.500H3.500M.5 9.500L3.500 6.500M9.500 6.500V9.500H6.500M9.500 9.500L6.500 6.500" strokeWidth=".8" />
                  </svg>
                  <svg width="10" height="10" viewBox="0 0 10 10" fill="none" stroke="#555" strokeWidth="1.600"><path d="M1.500 1.500L8.500 8.500M8.500 1.500L1.500 8.500" /></svg>
                </DockButtons>
              </DockTitle>
              <Tabs>
                <Tab $pad={7}>Model</Tab>
                <Tab $on>Görevler</Tab>
              </Tabs>
              <Tree>
                <TreeRow $bold>
                  <BranchSvg w={21} d="M9.500 0V9M13 11.500H20" arrow="down" />
                  <TreeItem><DocIcon />&#8202;RotationSweep_7</TreeItem>
                </TreeRow>
                <TreeRow>
                  <BranchSvg w={40} d="M29.500 0V22M29.500 11.500H40" />
                  <TreeItem><SplineIcon s={17} />Freehand_BSpline</TreeItem>
                </TreeRow>
                <TreeRow>
                  <SelBlock><BranchSvg w={40} d="M29.500 0V22M29.500 11.500H40" /></SelBlock>
                  <TreeItem $sel><SplineIcon s={17} dim />Freehand_BSpline002 - Profil</TreeItem>
                </TreeRow>
                <TreeRow>
                  <BranchSvg w={40} d="M29.500 0V6M32 11.500H40" arrow="right" />
                  <TreeItem><SplitIcon />SplitCurve</TreeItem>
                </TreeRow>
              </Tree>
              <Splitter><Dash /><Dash /><Dash /><Dash /><Dash /></Splitter>
              <Props>
                <PropHead>
                  <HeadCell $w={144} $pad={16}>Özellik</HeadCell>
                  <HeadCell $pad={10}>Değer</HeadCell>
                </PropHead>
                <Group>Baz</Group>
                <PropLine name="Placement" value="[(0,00 0,00 1,00); 0,00 °; (0,00 ..." dark arrow />
                <PropLine name="Label" value="SplitCurve" />
                <PropLine name="Source" value="Freehand_BSpline001 [Edge1]" dark last />
                <Group>Split</Group>
                <PropLine name="Cutting Objects" value="" dark hot button />
                <PropLine name="Distance" value="0,00 mm" />
                <PropLine name="Values" value="[]" dark last />
              </Props>
              <Tabs $indent={5}>
                <Tab $on $line={26}>Görünüm</Tab>
                <Tab $pad={7} $line={26}>Veri</Tab>
              </Tabs>
            </Dock>
            <View><Scene /></View>
          </Main>
          <BottomRow>
            <MdiTab>
              <Logo s={17} />
              RotationSweep_7 : 1*
              <svg width="14" height="14" viewBox="0 0 14 14" fill="none" stroke="#999" strokeWidth="2.600"><path d="M1.500 1.500L12.500 12.500M12.500 1.500L1.500 12.500" /></svg>
            </MdiTab>
          </BottomRow>
          <StatusBar>
            <StatusText>Preselected: RotationSweep_7.Freehand_BSpline002.Vertex1 (3.934641 mm, -4.015853 mm, 0.000000 mm)</StatusText>
            <StatusButton $w={95} $gap={6}>
              <Mouse>
                <svg width="11" height="15" viewBox="0 0 11 15" fill="none" stroke="#3c474a" strokeWidth="1.300">
                  <rect x="1" y="1" width="9" height="13" rx="4" /><path d="M3.500 1.500V5Q5.500 8 7.500 5V1.500M5.500 3V5.500" />
                </svg>
                Blender
              </Mouse>
              <Caret />
            </StatusButton>
            <StatusButton $w={154} $gap={7}>12,67 mm x 8,46 mm<Caret /></StatusButton>
            <svg width="12" height="29" viewBox="0 0 12 29" fill="none" stroke="#b5b5b5"><path d="M0 28L12 16M4 28L12 20M8 28L12 24" /></svg>
          </StatusBar>
        </Body>
        <BottomEdge $h={5} />
      </Frame>

      <Dialog>
        <TitleBar $h={29} $muted>
          <TitleLead $w={50}><Logo /><Ring /></TitleLead>
          <TitleText>Link</TitleText>
          <WinButtons />
        </TitleBar>
        <DialogBody>
          <LinkList>
            <TreeRow>
              <BranchSvg w={19} d="M9.500 0V9M13 10.500H19" arrow="down" />
              <TreeItem><DocIcon />&#8202;RotationSweep_7</TreeItem>
            </TreeRow>
            <TreeRow $hot>
              <BranchSvg w={39} d="M29.500 0V22M29.500 11.500H39" />
              <TreeItem><SplineIcon s={17} dim />Freehand_BSpline002 - Profil</TreeItem>
            </TreeRow>
            <TreeRow>
              <BranchSvg w={39} d="M29.500 0V22M29.500 11.500H39" />
              <TreeItem><SplineIcon s={17} />Freehand_BSpline</TreeItem>
            </TreeRow>
            <TreeRow>
              <BranchSvg w={39} d="M29.500 0V8.500Q29.500 11.500 32 11.500H39" />
              <TreeItem><SplineIcon s={17} />Freehand_BSpline001</TreeItem>
            </TreeRow>
          </LinkList>
          <CheckRow><Box />Türüne göre filtre</CheckRow>
          <SearchRow><SearchLabel>Ara</SearchLabel><SearchInput /></SearchRow>
          <Buttons>
            <Button $push>Temizle</Button>
            <Button>Sıfırla</Button>
            <Button>
              <svg width="15" height="15" viewBox="0 0 15 15"><path d="M8.500 .8H14.300V6.500Q14 11.500 8 11.500V14.400L.8 9 6 3.500V6.500Q9 7 8.500 4z" fill="#6d8a5b" stroke="#3e5533" strokeWidth=".9" /></svg>
              <span><Key>T</Key>amam</span>
            </Button>
            <Button>
              <svg width="14" height="15" viewBox="0 0 14 15"><path d="M1 1.500L4 .8 7 5 11 1 13 2 9 7.500 12 13 9 14 6.500 9.500 3 14 .8 13 4.500 7.500z" fill="#b03a48" stroke="#6d1a26" strokeWidth=".9" /></svg>
              <span>İ<Key>p</Key>tal</span>
            </Button>
          </Buttons>
        </DialogBody>
        <BottomEdge $h={5} />
      </Dialog>

      <Bolt x={1075} y={288} />
      <Bolt x={1106} y={646} />
      <Bolt x={357} y={596} />
      <BoltDown x={179} y={650} />
    </Desktop>
  );
}
